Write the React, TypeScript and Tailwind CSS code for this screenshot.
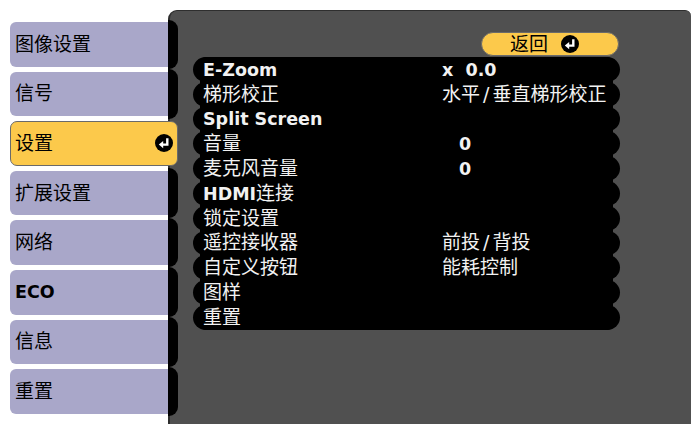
import React from "react";

function EnterIcon({ size = 18 }: { size?: number }) {
  return (
    <svg width={size} height={size} viewBox="0 0 18 18">
      <circle cx="9" cy="9" r="9" fill="#000" />
      <path d="M12.3 4.2 V10.6 H7.5" stroke="#fff" strokeWidth="2.4" fill="none" />
      <path d="M3.8 10.6 L8.2 6.9 L8.2 14.3 Z" fill="#fff" />
    </svg>
  );
}

const menu = ["图像设置", "信号", "设置", "扩展设置", "网络", "ECO", "信息", "重置"];

type Row = { label: React.ReactNode; value?: React.ReactNode };

const Slash = () => <span className="mx-[3px]">/</span>;

const rows: Row[] = [
  { label: <span className="font-bold text-[17.5px]">E-Zoom</span>, value: <span className="font-bold text-[17.5px] whitespace-pre">x  0.0</span> },
  { label: "梯形校正", value: <span>水平<Slash />垂直梯形校正</span> },
  { label: <span className="font-bold text-[17.5px]">Split Screen</span> },
  { label: "音量", value: <span className="font-bold text-[17.5px] pl-[17px]">0</span> },
  { label: "麦克风音量", value: <span className="font-bold text-[17.5px] pl-[17px]">0</span> },
  { label: <span><span className="font-bold text-[17.5px]">HDMI</span>连接</span> },
  { label: "锁定设置" },
  { label: "遥控接收器", value: <span>前投<Slash />背投</span> },
  { label: "自定义按钮", value: "能耗控制" },
  { label: "图样" },
  { label: "重置" },
];

export default function App() {
  return (
    <div
      className="w-[691px] h-[424px] overflow-hidden bg-white flex"
      style={{ fontFamily: '"DejaVu Sans", "Noto Sans CJK SC", sans-serif' }}
    >
      {/* left menu */}
      <div className="relative z-10 ml-[10px] w-[168px] pt-[22px] flex flex-col gap-[5px] shrink-0">
        {menu.map((m) =>
          m === "设置" ? (
            <div
              key={m}
              className="h-[44.6px] bg-[#fcc94b] border border-[#6a6a6a] rounded-[7px] flex items-center justify-between pl-[4px] pr-[4px]"
            >
              <span className="text-[19px] text-black leading-none">{m}</span>
              <EnterIcon size={18} />
            </div>
          ) : (
            <div key={m} className="h-[44.6px] flex">
              <div className="w-[158px] bg-[#a9a7c9] rounded-l-[6px] flex items-center pl-[5px]">
                <span className={`text-black leading-none ${m === "ECO" ? "font-bold text-[17.5px]" : "text-[19px]"}`}>
                  {m}
                </span>
              </div>
              <div className="w-[10px] -my-[2.5px] bg-black rounded-r-[9px]" />
            </div>
          )
        )}
      </div>

      {/* main panel */}
      <div className="-ml-[10px] mt-[10px] h-[420px] flex-1 bg-[#505050] border-l-2 border-t border-[#2e2e2e] rounded-tl-[9px] rounded-tr-[6px] flex flex-col">
        <div className="flex justify-end mr-[72px] mt-[21px]">
          <div className="w-[138px] h-[24px] rounded-full bg-[#fcc94b] border border-[#6a6a6a] flex items-center pl-[28px] gap-[13px]">
            <span className="text-[19px] text-black leading-none">返回</span>
            <EnterIcon size={18} />
          </div>
        </div>
        <div className="ml-[23px] mr-[71px] mt-[1px]">
          <div className="mx-[7px] bg-black rounded-[6px]">
            {rows.map((r, i) => (
              <div
                key={i}
                className="-mx-[7px] h-[24.8px] rounded-full bg-black flex items-center pl-[10px] text-[#f2f2f2] leading-none"
              >
                <div className="w-[239px] shrink-0 whitespace-nowrap text-[19px]">{r.label}</div>
                <div className="whitespace-nowrap text-[19px]">{r.value}</div>
              </div>
            ))}
          </div>
        </div>
      </div>
    </div>
  );
}
